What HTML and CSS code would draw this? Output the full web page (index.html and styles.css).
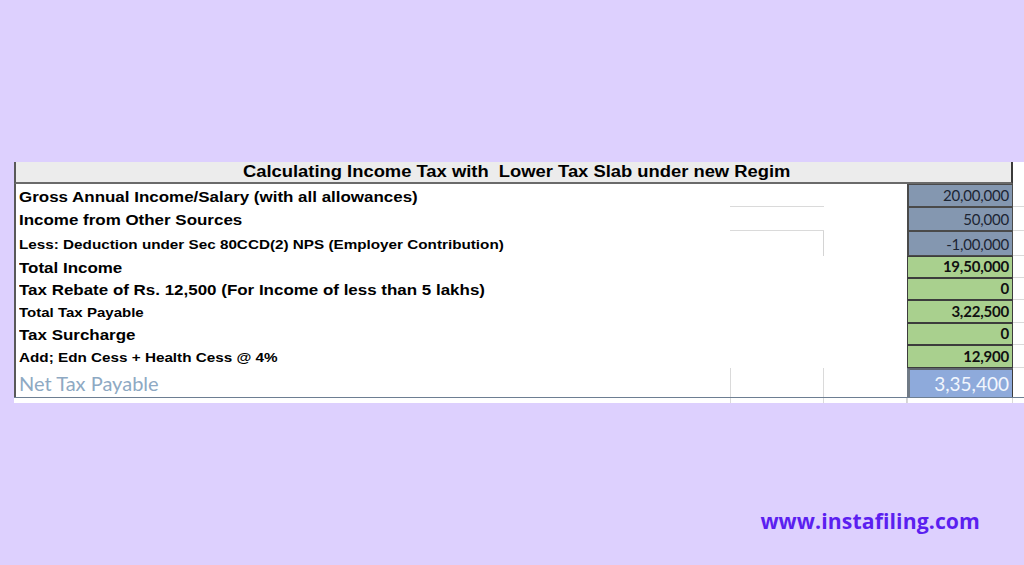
FILE: index.html
```html
<!DOCTYPE html>
<html lang="en">
<head>
<meta charset="utf-8">
<title>Calculating Income Tax with Lower Tax Slab under new Regim</title>
<link rel="stylesheet" href="styles.css">
</head>
<body>
<main class="page">
  <section class="sheet">
    <div class="row row-head">
      <div class="head-title"><span class="txt">Calculating Income Tax with&nbsp; Lower Tax Slab under new Regim</span></div>
      <div class="cell-e"></div>
    </div>

    <div class="row r1">
      <div class="label lg"><span class="txt">Gross Annual Income/Salary (with all allowances)</span></div>
      <div class="cell-b line-bottom"></div>
      <div class="cell-c"></div>
      <div class="val blue">20,00,000</div>
      <div class="cell-e line-bottom"></div>
    </div>
    <div class="row r2">
      <div class="label lg"><span class="txt">Income from Other Sources</span></div>
      <div class="cell-b line-bottom"></div>
      <div class="cell-c"></div>
      <div class="val blue">50,000</div>
      <div class="cell-e line-bottom"></div>
    </div>
    <div class="row r3">
      <div class="label sm"><span class="txt">Less: Deduction under Sec 80CCD(2) NPS (Employer Contribution)</span></div>
      <div class="cell-b line-right"></div>
      <div class="cell-c"></div>
      <div class="val blue">-1,00,000</div>
      <div class="cell-e line-bottom"></div>
    </div>
    <div class="row r4">
      <div class="label lg"><span class="txt">Total Income</span></div>
      <div class="cell-b"></div>
      <div class="cell-c"></div>
      <div class="val green">19,50,000</div>
      <div class="cell-e line-bottom"></div>
    </div>
    <div class="row r5">
      <div class="label lg"><span class="txt">Tax Rebate of Rs. 12,500 (For Income of less than 5 lakhs)</span></div>
      <div class="cell-b"></div>
      <div class="cell-c"></div>
      <div class="val green">0</div>
      <div class="cell-e line-bottom"></div>
    </div>
    <div class="row r6">
      <div class="label xs"><span class="txt">Total Tax Payable</span></div>
      <div class="cell-b"></div>
      <div class="cell-c"></div>
      <div class="val green">3,22,500</div>
      <div class="cell-e line-bottom"></div>
    </div>
    <div class="row r7">
      <div class="label lg"><span class="txt">Tax Surcharge</span></div>
      <div class="cell-b"></div>
      <div class="cell-c"></div>
      <div class="val green">0</div>
      <div class="cell-e line-bottom"></div>
    </div>
    <div class="row r8">
      <div class="label sm"><span class="txt">Add; Edn Cess + Health Cess @ 4%</span></div>
      <div class="cell-b"></div>
      <div class="cell-c"></div>
      <div class="val green">12,900</div>
      <div class="cell-e line-bottom"></div>
    </div>
    <div class="row r9">
      <div class="label net-label">Net Tax Payable</div>
      <div class="cell-b line-sides"></div>
      <div class="cell-c"></div>
      <div class="val net">3,35,400</div>
      <div class="cell-e"></div>
    </div>
    <div class="row tail">
      <div class="tail-a"></div>
      <div class="cell-b line-sides"></div>
      <div class="cell-c line-right"></div>
      <div class="tail-d"></div>
      <div class="cell-e"></div>
    </div>
  </section>

  <footer class="site">www.instafiling.com</footer>
</main>
</body>
</html>
```

FILE: styles.css
```css
* { box-sizing: border-box; }

html, body {
  margin: 0;
  padding: 0;
}

body {
  background: #ddd0fe;
  width: 1024px;
  height: 565px;
  overflow: hidden;
  font-family: "Liberation Sans", Arial, sans-serif;
  color: #000;
}

.page {
  display: flex;
  flex-direction: column;
  height: 565px;
}

.sheet {
  margin-top: 162px;
  margin-left: 14px;
  background: #fff;
  display: flex;
  flex-direction: column;
}

.row {
  display: grid;
  grid-template-columns: 716px 94px 83px 106px 1fr;
}

.row-head { height: 22px; }
.r1 { height: 23px; }
.r2 { height: 24px; }
.r3 { height: 25px; }
.r4 { height: 22px; }
.r5 { height: 22px; }
.r6 { height: 23px; }
.r7 { height: 22px; }
.r8 { height: 23px; }
.r9 { height: 30px; border-bottom: 1px solid #6d7e92; }
.tail { height: 5px; }

.txt {
  display: inline-block;
  transform: scaleX(1.13);
  transform-origin: left center;
}

.row-head .head-title {
  grid-column: 1 / 5;
  background: #ececec;
  border-left: 2px solid #595959;
  border-right: 2px solid #3a3a3a;
  border-bottom: 2px solid #6a6a6a;
  font-weight: bold;
  font-size: 16px;
  line-height: 20px;
  padding-left: 227px;
  white-space: nowrap;
}

.row-head .head-title .txt {
  transform: scaleX(1.148);
}

.label {
  border-left: 2px solid #595959;
  padding-left: 3px;
  font-weight: bold;
  display: flex;
  align-items: flex-end;
  white-space: nowrap;
  padding-bottom: 2px;
}

.lg { font-size: 15px; }
.sm { font-size: 13.5px; }
.xs { font-size: 13.3px; }

.r3 .label { padding-bottom: 4px; }
.r8 .label { padding-bottom: 3px; }
.r6 .label { padding-bottom: 3px; }
.r2 .label { padding-bottom: 3px; }

.net-label {
  font-family: Lato, "Liberation Sans", sans-serif;
  font-weight: normal;
  font-size: 20px;
  color: #8ea9c3;
  padding-bottom: 2px;
}

.tail-d { border-left: 1px solid #d9d9d9; border-right: 1px solid #d9d9d9; }

.line-bottom { border-bottom: 1px solid #dadada; }
.line-right { border-right: 1px solid #d4d4d4; }
.line-sides { border-left: 1px solid #dadada; border-right: 1px solid #dadada; }

.val {
  font-family: Lato, "Liberation Sans", sans-serif;
  font-size: 15px;
  letter-spacing: -0.2px;
  text-align: right;
  padding-right: 3px;
  display: flex;
  align-items: flex-end;
  justify-content: flex-end;
  padding-bottom: 2px;
  border: 1px solid #3c3c3c;
}

.blue {
  background: #8497b0;
  color: #1c2533;
  border-left-width: 2px;
  border-color: #4a4a4a;
}

.green {
  background: #a9d08e;
  font-weight: bold;
  color: #111;
}

.net {
  background: #8eaadb;
  color: #f2f6fd;
  font-size: 19px;
  letter-spacing: 0;
  border-left: 3px solid #707a86;
  border-top: 2px solid #5f6670;
  border-bottom: none;
  padding-bottom: 2px;
}

.site {
  margin-top: 103px;
  align-self: flex-end;
  margin-right: 44px;
  font-family: "Open Sans", sans-serif;
  font-weight: 700;
  font-size: 21.2px;
  color: #5b1ff0;
  letter-spacing: 0.1px;
}
```
